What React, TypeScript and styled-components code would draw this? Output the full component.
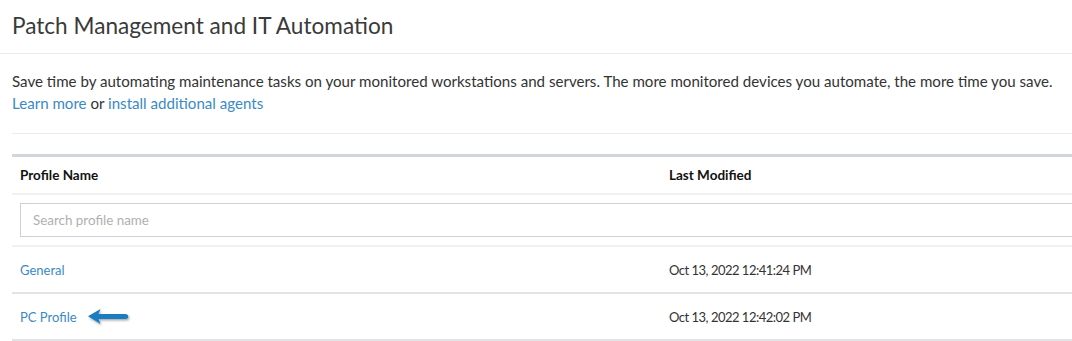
import React from 'react'
import styled, {createGlobalStyle} from 'styled-components'

const GlobalStyle = createGlobalStyle`
  body {
    margin: 0;
    background: #fff;
    font-family: Lato, "Noto Sans", sans-serif;
    color: #333;
    overflow: hidden;
  }
`

const colors = {
    text: '#333',
    link: '#3a8ac3',
    line: '#ebebeb',
    tableTop: '#d3d5de',
}

type ProfileType = {
    name: string
    modified: string
    pointed?: boolean
}

const profiles: ProfileType[] = [
    {name: 'General', modified: 'Oct 13, 2022 12:41:24 PM'},
    {name: 'PC Profile', modified: 'Oct 13, 2022 12:42:02 PM', pointed: true},
]

const Arrow = () => (
    <ArrowSvg width="48" height="22" viewBox="0 0 48 22">
        <defs>
            <filter id="arrowShadow" x="-20%" y="-40%" width="140%" height="180%">
                <feDropShadow dx="1" dy="1.5" stdDeviation="1.2" floodColor="#000" floodOpacity="0.35"/>
            </filter>
        </defs>
        <path d="M3 10.3 L15.5 3 L13.5 8 L40 8 Q43.3 8 43.3 10.5 Q43.3 13 40 13 L13.5 13 L15.5 18 Z"
              fill="#1b7cc0" filter="url(#arrowShadow)"/>
    </ArrowSvg>
)

export default function App() {
    return (
        <Page>
            <GlobalStyle/>
            <Title>Patch Management and IT Automation</Title>
            <Content>
                <Intro>
                    Save time by automating maintenance tasks on your monitored workstations and servers. The more
                    monitored devices you automate, the more time you save.
                    <br/>
                    <Link href="#">Learn more</Link> or <Link href="#">install additional agents</Link>
                </Intro>
                <Table>
                    <HeadRow>
                        <NameCell><HeadText>Profile Name</HeadText></NameCell>
                        <DateCell><HeadText>Last Modified</HeadText></DateCell>
                    </HeadRow>
                    <SearchRow>
                        <SearchInput placeholder="Search profile name"/>
                    </SearchRow>
                    {profiles.map(p => (
                        <Row key={p.name}>
                            <NameCell>
                                <Link href="#">{p.name}</Link>
                                {p.pointed && <Arrow/>}
                            </NameCell>
                            <DateCell>{p.modified}</DateCell>
                        </Row>
                    ))}
                </Table>
            </Content>
        </Page>
    )
}

const Page = styled.div`
  width: 1072px;
  height: 341px;
  overflow: hidden;
`

const Title = styled.h1`
  margin: 0;
  padding: 12px 12px 0;
  height: 41px;
  font-size: 22.6px;
  font-weight: 400;
  line-height: 28px;
  color: #3a3a3a;
  border-bottom: 1px solid ${colors.line};
`

const Content = styled.div`
  padding: 0 0 0 12px;
`

const Intro = styled.p`
  margin: 0;
  padding: 16px 0 19px;
  font-size: 15.1px;
  line-height: 22px;
  color: ${colors.text};
  border-bottom: 1px solid ${colors.line};
  white-space: nowrap;
`

const Link = styled.a`
  color: ${colors.link};
  text-decoration: none;
`

const Table = styled.div`
  margin-top: 20px;
  width: 1100px;
  border-top: 3px solid ${colors.tableTop};
`

const HeadRow = styled.div`
  display: flex;
  align-items: center;
  height: 36px;
  border-bottom: 2px solid #f1f1f2;
`

const Row = styled.div`
  display: flex;
  align-items: center;
  height: 45px;
  border-bottom: 2px solid #e3e3e6;
  font-size: 13px;
`

const NameCell = styled.div`
  display: flex;
  align-items: center;
  width: 649px;
  padding-left: 8px;
  font-size: 13px;
`

const DateCell = styled.div`
  font-size: 13px;
  letter-spacing: -0.5px;
  color: ${colors.text};
`

const HeadText = styled.span`
  font-size: 13.5px;
  font-weight: 700;
  letter-spacing: 0;
  color: #111;
`

const SearchRow = styled.div`
  padding: 8px 0 8px 8px;
  border-bottom: 2px solid #f1f1f2;
`

const SearchInput = styled.input`
  box-sizing: border-box;
  width: 1100px;
  height: 34px;
  padding: 0 12px;
  border: 1px solid #ccd0d8;
  border-radius: 0;
  font-family: Lato, "Noto Sans", sans-serif;
  font-size: 13.4px;
  color: #333;
  outline: none;

  &::placeholder {
    color: #b0b0b0;
    opacity: 1;
  }
`

const ArrowSvg = styled.svg`
  margin-left: 8px;
  margin-top: 1px;
`
